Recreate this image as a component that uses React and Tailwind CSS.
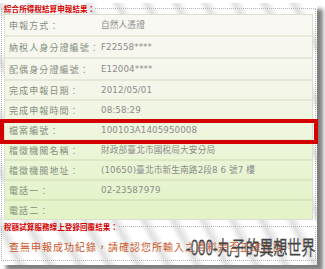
export default function App() {
  const rows = [
    { k: "申報方式：", v: "自然人憑證", h: "h-[20px]" },
    { k: "納稅人身分證編號：", v: "F22558****", h: "h-[22px]" },
    { k: "配偶身分證編號：", v: "E12004****", h: "h-[22px]" },
    { k: "完成申報日期：", v: "2012/05/01", h: "h-[20px]" },
    { k: "完成申報時間：", v: "08:58:29", h: "h-[20px]" },
    { k: "檔案編號：", v: "100103A1405950008", h: "h-[20px]" },
    { k: "稽徵機關名稱：", v: "財政部臺北市國稅局大安分局", h: "h-[20px]" },
    { k: "稽徵機關地址：", v: "(10650)臺北市新生南路2段8 6 號7 樓", h: "h-[20px]" },
    { k: "電話一：", v: "02-23587979", h: "h-[20px]" },
    { k: "電話二：", v: "", h: "h-[20px]" },
  ];
  return (
    <div className="w-[325px] h-[269px] bg-white overflow-hidden relative">
      <div className="w-[317px] h-[262px] relative shadow-[6px_6px_4px_rgba(0,0,0,0.5)] bg-[repeating-linear-gradient(62deg,#ffffff_0px,#ffffff_12px,#e0e0e0_18px,#ffffff_26px)] font-['Noto_Sans_CJK_TC',sans-serif]">
        <fieldset className="mx-[1px] pt-0 mt-[3px] border border-b-0 border-dotted border-[#b5b5b5] px-[2px] min-w-0">
          <legend className="text-[7.5px] font-bold text-[#d40000] leading-[11px] p-0 tracking-[0.1px]">綜合所得稅結算申報結果：</legend>
          <div className="border border-[#dcdfd0] bg-[linear-gradient(to_bottom,#f9f8f3,#f5f6ea_35%,#eaf5d6_70%,#e3f3c6)]">
            {rows.map((r, i) => (
              <div
                key={i}
                className={`${r.h} flex items-center ${i > 0 ? "border-t-2 border-[rgba(150,160,110,0.16)]" : ""}`}
              >
                <div className="w-[96px] pl-[4px] text-[9px] leading-none tracking-[1.1px] text-[#84907f] whitespace-nowrap">
                  {r.k}
                </div>
                <div className="text-[8.7px] leading-none text-[#8c8c8c] whitespace-nowrap font-['DejaVu_Sans','Noto_Sans_CJK_TC',sans-serif] tracking-[0.1px]">
                  {r.v}
                </div>
              </div>
            ))}
          </div>
        </fieldset>
        <fieldset className="mx-[1px] mt-[1px] border border-dotted border-[#b5b5b5] px-[2px] pb-[3px] min-w-0">
          <legend className="text-[7.5px] font-bold text-[#d40000] leading-[11px] p-0 tracking-[0.1px]">稅額試算服務線上登錄回覆結果：</legend>
          <div className="h-[25px] flex items-center pl-[5px] pt-[3px] text-[10px] tracking-[1px] text-[#cc5a2c] whitespace-nowrap overflow-hidden">
            查無申報成功紀錄，請確認您所輸入之資料是否正確無誤。
          </div>
        </fieldset>
        <div className="absolute left-0 top-[116px] w-[318px] h-[25px] border-[4px] border-[#d40000]"></div>
        <div className="absolute left-[186px] top-[234px] text-[17px] leading-none text-white font-light scale-x-[0.82] scale-y-[1.15] origin-top-left [-webkit-text-stroke:0.7px_#444] whitespace-nowrap font-['Noto_Sans_CJK_TC',sans-serif]">
          -000-丸子的異想世界
        </div>
      </div>
    </div>
  );
}
